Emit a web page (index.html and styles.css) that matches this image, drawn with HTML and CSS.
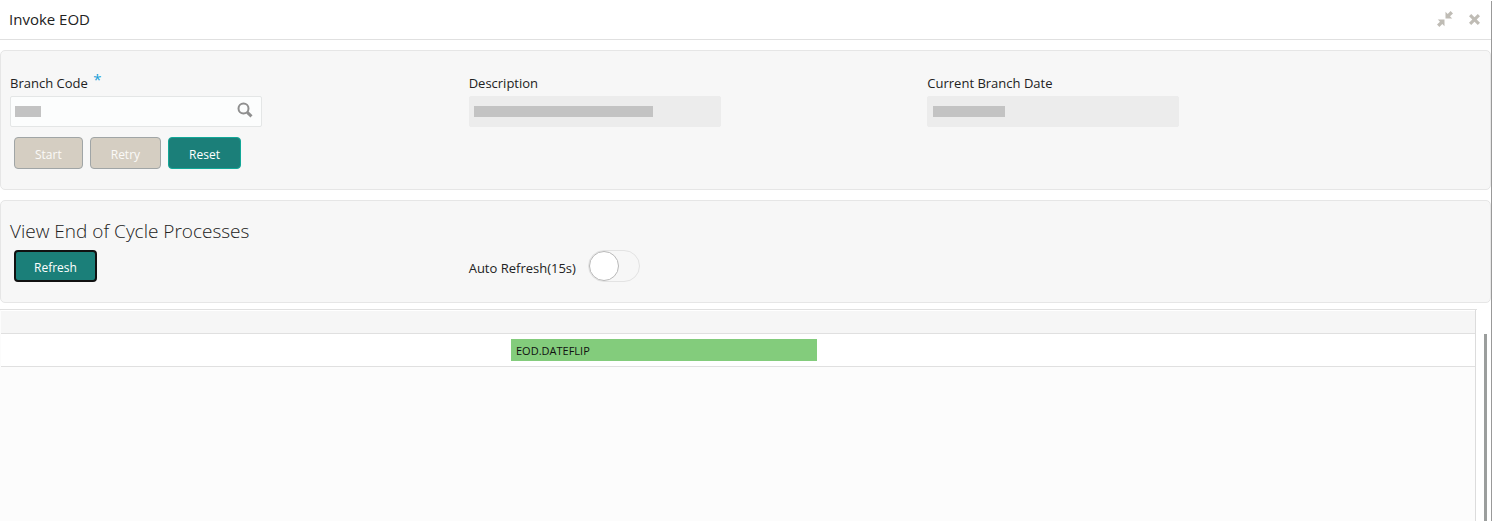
FILE: index.html
```html
<!DOCTYPE html>
<html lang="en">
<head>
    <meta charset="UTF-8">
    <meta name="viewport" content="width=device-width, initial-scale=1.0">
    <title>Invoke EOD</title>
    <link rel="stylesheet" href="styles.css">
</head>
<body>
    <main class="dialog">
        <header class="dialog-header">
            <h1>Invoke EOD</h1>
            <div class="window-actions">
                <button type="button" class="icon-btn" aria-label="Collapse">
                    <svg width="16" height="16" viewBox="0 0 16 16">
                        <path d="M8.5 0.8v6.7h6.7l-2.2-2.2 3-2.9L13.6 0l-2.9 3zM7.5 15.2V8.5H.8l2.2 2.2-3 2.9L2.4 16l2.9-3z"/>
                    </svg>
                </button>
                <button type="button" class="icon-btn" aria-label="Close">
                    <svg width="11" height="11" viewBox="0 0 10 10">
                        <path d="M2 0L0 2l3 3-3 3 2 2 3-3 3 3 2-2-3-3 3-3-2-2-3 3z"/>
                    </svg>
                </button>
            </div>
        </header>

        <!-- Branch selection -->
        <section class="panel">
            <div class="form-grid">
                <div>
                    <label class="field-label" for="branchCode">Branch Code <span class="required">*</span></label>
                    <div class="field">
                        <span class="mask mask-code"></span>
                        <input type="text" id="branchCode">
                        <button type="button" class="search-btn" aria-label="Search">
                            <svg width="16" height="16" viewBox="0 0 16 16">
                                <circle cx="6.5" cy="6.5" r="5"/>
                                <path d="M10.3 10.3l4.2 4"/>
                            </svg>
                        </button>
                    </div>
                </div>
                <div>
                    <label class="field-label" for="description">Description</label>
                    <div class="field readonly">
                        <span class="mask mask-description"></span>
                        <input type="text" id="description" readonly>
                    </div>
                </div>
                <div>
                    <label class="field-label" for="branchDate">Current Branch Date</label>
                    <div class="field readonly">
                        <span class="mask mask-date"></span>
                        <input type="text" id="branchDate" readonly>
                    </div>
                </div>
            </div>
            <div class="button-row">
                <button type="button" class="btn" disabled>Start</button>
                <button type="button" class="btn" disabled>Retry</button>
                <button type="button" class="btn">Reset</button>
            </div>
        </section>

        <!-- End of cycle processes -->
        <section class="panel panel-view">
            <h2>View End of Cycle Processes</h2>
            <div class="form-grid">
                <div class="refresh-cell">
                    <button type="button" class="btn btn-active">Refresh</button>
                </div>
                <div class="toggle-cell">
                    <label for="autoRefresh">Auto Refresh(15s)</label>
                    <input type="checkbox" class="toggle" id="autoRefresh" role="switch">
                </div>
            </div>
        </section>

        <div class="gantt-wrap">
            <div class="gantt">
                <div class="gantt-header"></div>
                <div class="gantt-row">
                    <div class="gantt-bar" style="margin-left: 34.6%; width: 20.75%">EOD.DATEFLIP</div>
                </div>
            </div>
            <div class="scroll-track">
                <div class="scroll-thumb"></div>
            </div>
        </div>
    </main>
</body>
</html>
```
FILE: styles.css
```css
:root {
    --teal: #1b7f79;
    --panel: #f7f7f7;
    --line: #e0e0e0;
    --mask: #c3c3c3;
}

*, *::before {
    box-sizing: border-box;
}

body {
    margin: 0;
    padding: 1px 2px 1px 0;
    min-height: 100vh;
    display: flex;
    background: #fff;
    color: #222;
    font-family: "Open Sans", "Noto Sans", sans-serif;
    font-size: 13px;
    line-height: 20px;
}

h1, h2 {
    margin: 0;
    font-weight: 400;
}

button, input {
    font-family: inherit;
    font-size: inherit;
}

.dialog {
    flex: 1;
    display: flex;
    flex-direction: column;
    border-right: 1px solid #999;
}

.dialog-header {
    display: flex;
    align-items: center;
    justify-content: space-between;
    height: 39px;
    padding: 0 11px 2px 9px;
    border-bottom: 1px solid var(--line);
}

.dialog-header h1 {
    font-size: 15px;
}

.window-actions {
    display: flex;
    align-items: center;
    gap: 16px;
}

.icon-btn {
    display: flex;
    padding: 0;
    border: none;
    background: none;
    cursor: pointer;
}

.icon-btn svg {
    fill: #bfbcb5;
}

.panel {
    margin-top: 10px;
    padding: 22px 104px 20px 9px;
    background: var(--panel);
    border: 1px solid #e6e6e6;
    border-radius: 5px;
}

.panel-view {
    padding-top: 16px;
}

.panel h2 {
    margin-bottom: 5px;
    font-size: 19px;
    font-weight: 300;
    line-height: 28px;
}

.form-grid {
    display: grid;
    grid-template-columns: repeat(3, 1fr);
}

.field-label {
    display: block;
    height: 20px;
    margin-bottom: 3px;
}

.required {
    margin-left: 2px;
    color: #1ba0d7;
    font-size: 15px;
    line-height: 12px;
    vertical-align: 3px;
}

.field {
    display: flex;
    align-items: center;
    width: 252px;
    max-width: 100%;
    height: 31px;
    padding: 0 8px 0 4px;
    background: #fcfdfd;
    border: 1px solid #e4e6e6;
    border-radius: 2px;
}

.field input {
    flex: 1;
    min-width: 0;
    padding: 0;
    border: none;
    outline: none;
    background: none;
}

.field.readonly {
    background: #ececec;
    border-color: #ececec;
}

.mask {
    height: 11px;
    background: var(--mask);
}

.mask-code {
    width: 26px;
}

.mask-description {
    width: 179px;
}

.mask-date {
    width: 72px;
    margin-left: 1px;
}

.search-btn {
    display: flex;
    padding: 0 0 4px;
    border: none;
    background: none;
    cursor: pointer;
}

.search-btn svg {
    fill: none;
    stroke: #8f8f8f;
    stroke-width: 2;
}

.search-btn path {
    stroke-width: 3;
}

.button-row {
    display: flex;
    gap: 7px;
    margin-top: 10px;
    padding-left: 4px;
}

.btn {
    height: 32px;
    padding: 2px 20px 0;
    background: var(--teal);
    border: 1px solid #12a898;
    border-radius: 4px;
    color: #fff;
    font-size: 12px;
    cursor: pointer;
}

.btn:disabled {
    background: #d5cec2;
    border-color: #a0a5a6;
    color: #fbfaf8;
    cursor: default;
}

.btn-active {
    border: 2px solid #111;
    padding: 2px 18px 0;
}

.refresh-cell {
    padding-left: 4px;
}

.toggle-cell {
    display: flex;
    align-items: center;
    gap: 12px;
}

.toggle-cell label {
    padding-top: 4px;
}

.toggle {
    appearance: none;
    display: flex;
    width: 52px;
    height: 32px;
    margin: 0;
    background: var(--panel);
    border: 1px solid #e3e3e3;
    border-radius: 16px;
    cursor: pointer;
}

.toggle::before {
    content: "";
    width: 30px;
    height: 30px;
    background: #fff;
    border: 1px solid #b8b8b8;
    border-radius: 50%;
}

.toggle:checked {
    justify-content: flex-end;
    background: var(--teal);
}

.gantt-wrap {
    flex: 1;
    display: flex;
    margin-top: 6px;
    border-top: 1px solid var(--line);
    border-image: linear-gradient(90deg, var(--line) calc(100% - 15px), transparent calc(100% - 15px)) 1;
}

.gantt {
    flex: 1;
    padding-left: 1px;
    background: #fcfcfc;
    border-right: 1px solid #dcdcdc;
}

.gantt-header {
    height: 24px;
    background: #f6f6f6;
    border-top: 1px solid #fff;
    border-bottom: 1px solid var(--line);
}

.gantt-row {
    padding: 5px 0;
    background: #fff;
    border-bottom: 1px solid var(--line);
}

.gantt-bar {
    height: 22px;
    padding-left: 5px;
    background: #83cc7c;
    color: #111;
    font-size: 11px;
    line-height: 23px;
    white-space: nowrap;
}

.scroll-track {
    width: 15px;
    padding: 24px 0 0 8px;
}

.scroll-thumb {
    width: 3px;
    height: 100%;
    background: #9b9e9d;
}
```
